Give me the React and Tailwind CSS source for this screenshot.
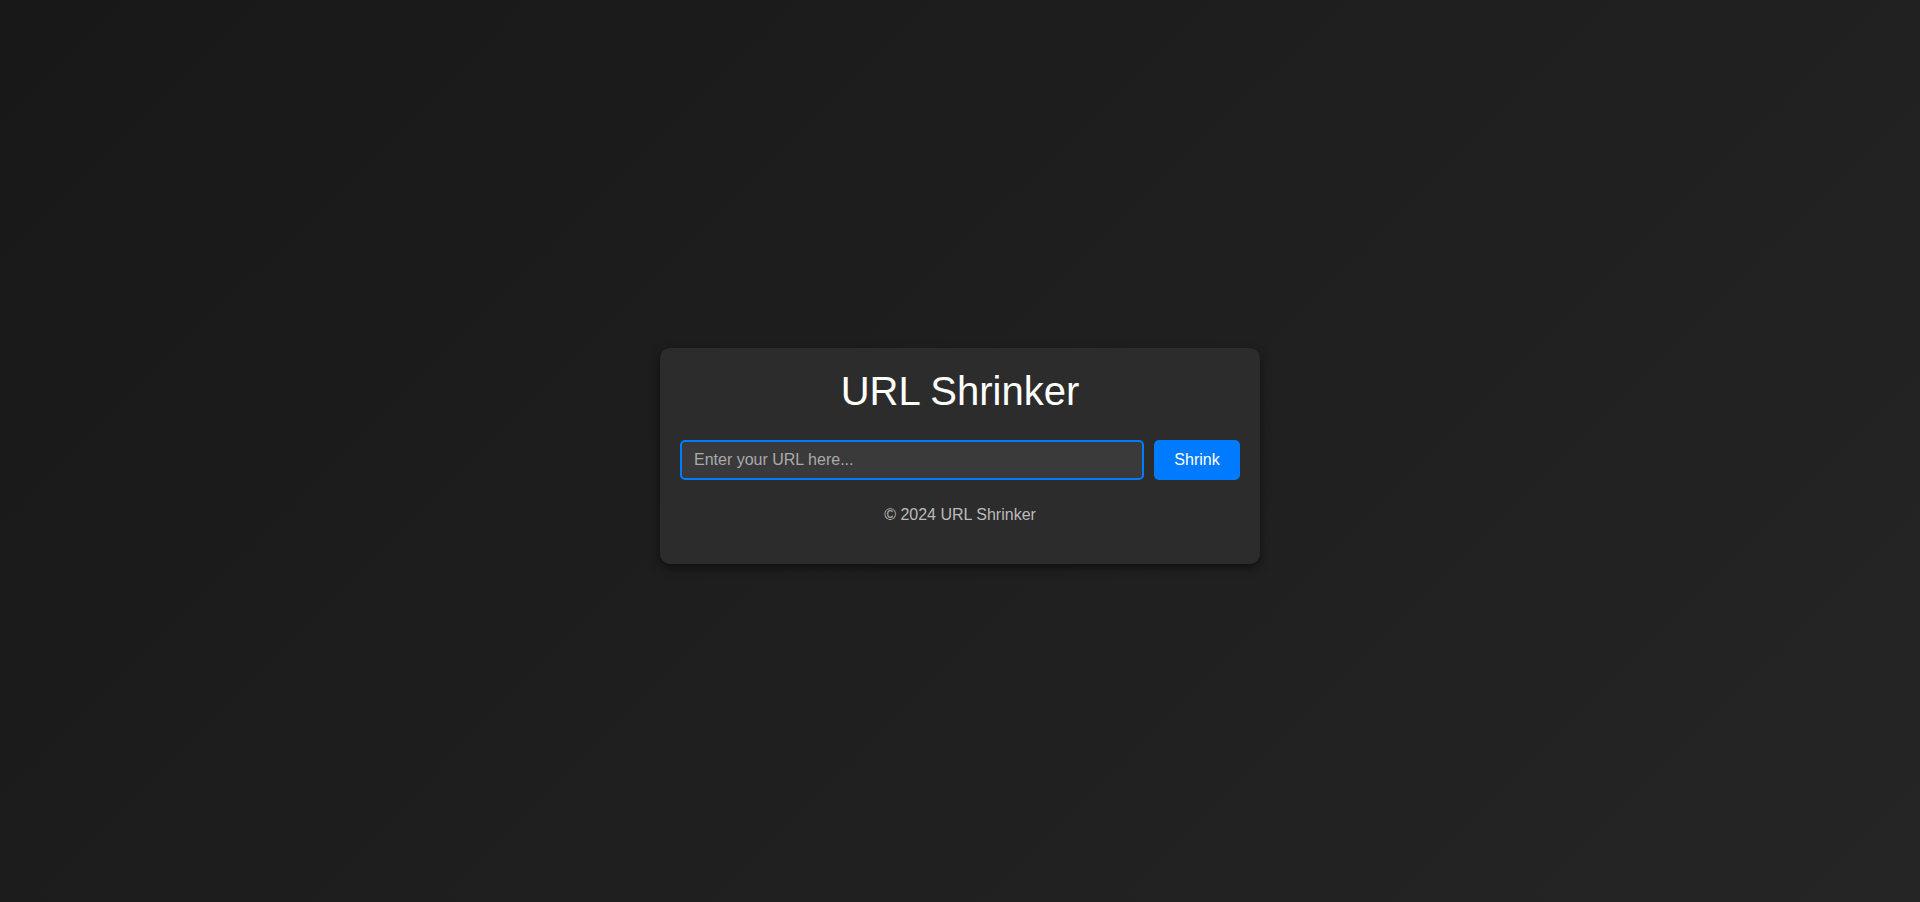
export default function App() {
  return (
    <div
      className="min-h-screen flex items-center justify-center bg-[linear-gradient(135deg,#181818,#252525)] pt-[9px]"
      style={{ fontFamily: '"Liberation Sans", Arial, sans-serif' }}
    >
      <div className="w-[600px] rounded-[10px] bg-[#2c2c2c] px-5 pt-5 pb-[40px] shadow-[0_4px_10px_rgba(0,0,0,0.5)] text-center">
        <h1 className="text-[40px] leading-[46px] text-white font-normal">URL Shrinker</h1>
        <div className="mt-[26px] flex gap-[10px]">
          <input
            type="text"
            placeholder="Enter your URL here..."
            className="flex-1 h-10 rounded-[5px] border-2 border-[#007bff] bg-[#3a3a3a] px-[12px] text-base text-white placeholder:text-[#aaaaaa] outline-none"
          />
          <button className="h-10 w-[86px] rounded-[5px] bg-[#007bff] text-base text-white">
            Shrink
          </button>
        </div>
        <p className="mt-[26px] text-base leading-[18px] text-[#bbbbbb]">© 2024 URL Shrinker</p>
      </div>
    </div>
  )
}
